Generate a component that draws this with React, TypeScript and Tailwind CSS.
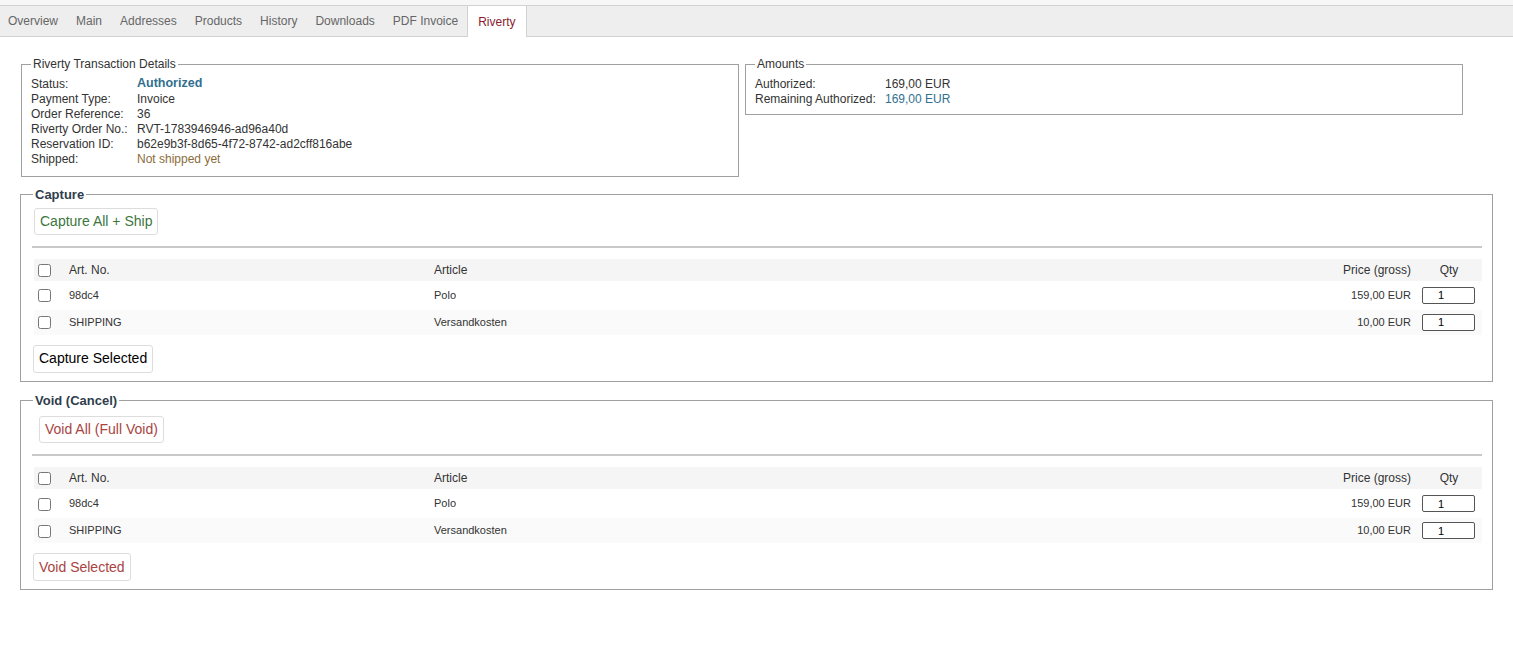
import React from "react";

const TABS = ["Overview", "Main", "Addresses", "Products", "History", "Downloads", "PDF Invoice", "Riverty"];

const ITEMS = [
    { artNo: "98dc4", article: "Polo", price: "159,00 EUR", qty: "1" },
    { artNo: "SHIPPING", article: "Versandkosten", price: "10,00 EUR", qty: "1" },
];

const DETAILS: { label: string; value: string; cls?: string }[] = [
    { label: "Status:", value: "Authorized", cls: "font-bold text-[12.5px] text-[#31708f]" },
    { label: "Payment Type:", value: "Invoice" },
    { label: "Order Reference:", value: "36" },
    { label: "Riverty Order No.:", value: "RVT-1783946946-ad96a40d" },
    { label: "Reservation ID:", value: "b62e9b3f-8d65-4f72-8742-ad2cff816abe" },
    { label: "Shipped:", value: "Not shipped yet", cls: "text-[#8a6d3b]" },
];

function Checkbox() {
    return <input type="checkbox" className="m-0 h-[13px] w-[13px] align-middle" />;
}

function ItemsTable() {
    return (
        <table className="w-full border-separate border-spacing-y-[2px] table-fixed">
            <thead>
                <tr className="bg-[#f5f5f5] h-[22px] text-[12px] text-[#333]">
                    <th className="w-[32px] pl-[4px] text-left font-normal"><Checkbox /></th>
                    <th className="w-[368px] pl-[3px] text-left font-normal">Art. No.</th>
                    <th className="text-left font-normal">Article</th>
                    <th className="w-[150px] pr-[5px] text-right font-normal">Price (gross)</th>
                    <th className="w-[66px] text-center font-normal">Qty</th>
                </tr>
            </thead>
            <tbody>
                {ITEMS.map((item, i) => (
                    <tr key={item.artNo} className={i % 2 === 1 ? "bg-[#fafafa] h-[25px]" : "bg-white h-[25px]"}>
                        <td className="pl-[4px]"><Checkbox /></td>
                        <td className="pl-[3px] text-[11px] text-[#333]">{item.artNo}</td>
                        <td className="text-[11px] text-[#333]">{item.article}</td>
                        <td className="pr-[5px] text-right text-[11px] text-[#333]">{item.price}</td>
                        <td className="pl-[6px]">
                            <input
                                defaultValue={item.qty}
                                className="block h-[17px] w-[53px] rounded-[2px] border border-[#555] bg-white pl-[15px] text-[11px] text-black outline-none"
                            />
                        </td>
                    </tr>
                ))}
            </tbody>
        </table>
    );
}

function ActionSection({
    title,
    topButton,
    topClass,
    bottomButton,
    bottomClass,
}: {
    title: string;
    topButton: string;
    topClass: string;
    bottomButton: string;
    bottomClass: string;
}) {
    return (
        <fieldset className="border border-[#a0a0a0] pl-[13px] pr-[10px] pb-[8px]">
            <legend className="px-[2px] -ml-[1px] text-[13px] font-bold text-[#2f3d4c]">{title}</legend>
            <div className="pt-[3px]">
                <button className={"h-[27px] rounded-[3px] border border-[#ddd] bg-white px-[5px] text-[14px] " + topClass}>
                    {topButton}
                </button>
            </div>
            <div className="-ml-[2px] mt-[11px] mb-[9px] h-[2px] bg-[#c8c8c8]" />
            <ItemsTable />
            <div className="mt-[8px]">
                <button className={"h-[28px] -ml-[1px] rounded-[3px] border border-[#ddd] bg-white px-[5px] text-[14px] " + bottomClass}>
                    {bottomButton}
                </button>
            </div>
        </fieldset>
    );
}

export default function App() {
    return (
        <div className="min-h-[656px] bg-white font-['Liberation_Sans',Arial,sans-serif] text-[#333]">
            {/* Tab strip */}
            <div className="h-[5px] bg-[#f7f7f7]" />
            <div className="flex h-[32px] border-y border-[#d2d2d2] bg-[#eeeeee]">
                <div className="flex -ml-[1px]">
                    {TABS.map((tab) => {
                        const active = tab === "Riverty";
                        return (
                            <div
                                key={tab}
                                className={
                                    active
                                        ? "flex h-[31px] items-center border-x border-[#d2d2d2] bg-white px-[10px] text-[12px] text-[#8b1c2c]"
                                        : "flex h-[30px] items-center px-[9px] text-[12px] text-[#666]"
                                }
                            >
                                {tab}
                            </div>
                        );
                    })}
                </div>
            </div>

            <div className="px-[20px] pt-[18px]">
                {/* Top info boxes */}
                <div className="flex items-start gap-[6px] pl-[1px]">
                    <fieldset className="w-[718px] border border-[#a0a0a0] pl-[9px] pt-[3px] pb-[10px]">
                        <legend className="px-[2px] text-[12px] text-[#333]">Riverty Transaction Details</legend>
                        {DETAILS.map((d) => (
                            <div key={d.label} className="flex h-[15px] items-center text-[12px]">
                                <span className="w-[106px] shrink-0 text-[#333]">{d.label}</span>
                                <span className={d.cls ?? "text-[#333]"}>{d.value}</span>
                            </div>
                        ))}
                    </fieldset>
                    <fieldset className="w-[718px] border border-[#a0a0a0] pl-[9px] pt-[3px] pb-[8px]">
                        <legend className="px-[2px] text-[12px] text-[#333]">Amounts</legend>
                        <div className="flex h-[15px] items-center text-[12px]">
                            <span className="w-[130px] shrink-0">Authorized:</span>
                            <span>169,00 EUR</span>
                        </div>
                        <div className="flex h-[15px] items-center text-[12px]">
                            <span className="w-[130px] shrink-0">Remaining Authorized:</span>
                            <span className="text-[#31708f]">169,00 EUR</span>
                        </div>
                    </fieldset>
                </div>

                <div className="mt-[8px]">
                    <ActionSection
                        title="Capture"
                        topButton="Capture All + Ship"
                        topClass="text-[#3c763d]"
                        bottomButton="Capture Selected"
                        bottomClass="text-black"
                    />
                </div>
                <div className="mt-[9px]">
                    <ActionSection
                        title="Void (Cancel)"
                        topButton="Void All (Full Void)"
                        topClass="ml-[5px] mt-[3px] text-[#a94442]"
                        bottomButton="Void Selected"
                        bottomClass="text-[#a94442]"
                    />
                </div>
            </div>
        </div>
    );
}
